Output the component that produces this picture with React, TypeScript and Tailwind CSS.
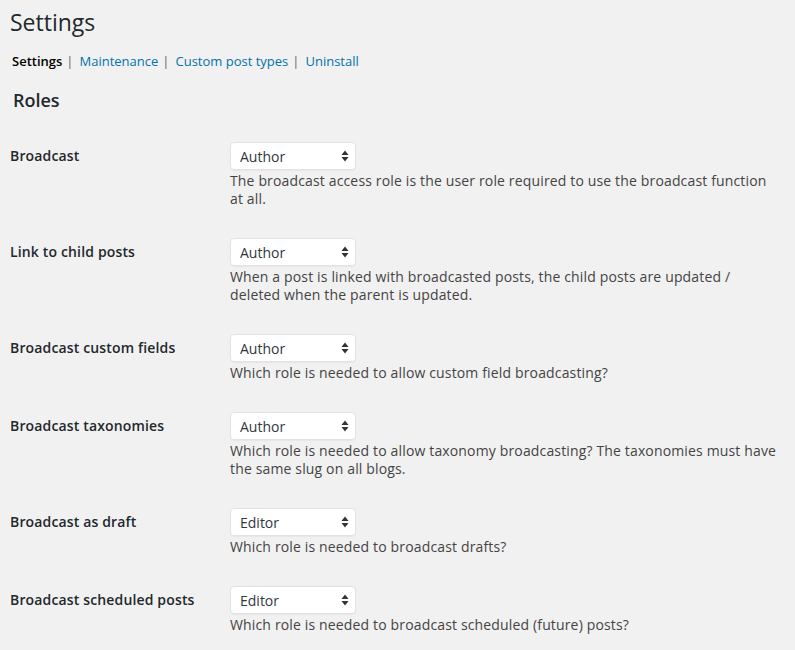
import React from 'react';

const rows = [
  {
    label: 'Broadcast',
    value: 'Author',
    desc: 'The broadcast access role is the user role required to use the broadcast function at all.',
  },
  {
    label: 'Link to child posts',
    value: 'Author',
    desc: 'When a post is linked with broadcasted posts, the child posts are updated / deleted when the parent is updated.',
  },
  {
    label: 'Broadcast custom fields',
    value: 'Author',
    desc: 'Which role is needed to allow custom field broadcasting?',
  },
  {
    label: 'Broadcast taxonomies',
    value: 'Author',
    desc: 'Which role is needed to allow taxonomy broadcasting? The taxonomies must have the same slug on all blogs.',
  },
  {
    label: 'Broadcast as draft',
    value: 'Editor',
    desc: 'Which role is needed to broadcast drafts?',
  },
  {
    label: 'Broadcast scheduled posts',
    value: 'Editor',
    desc: 'Which role is needed to broadcast scheduled (future) posts?',
  },
];

const tabs = ['Settings', 'Maintenance', 'Custom post types', 'Uninstall'];

const SelectBox = ({ value }: { value: string }) => (
  <div className="flex h-[28px] w-[126px] items-center justify-between rounded-[4px] border border-[#e2e2e2] bg-white pl-[9px] pr-[6px] text-[14px] text-[#32373c] shadow-[0_1px_1px_rgba(0,0,0,0.04)]">
    <span>{value}</span>
    <svg width="8" height="12" viewBox="0 0 8 12">
      <path d="M4 0.5 L7.5 5 L0.5 5 Z" fill="#333" />
      <path d="M4 11.5 L7.5 7 L0.5 7 Z" fill="#333" />
    </svg>
  </div>
);

export default function App() {
  return (
    <div className="min-h-screen w-full bg-[#f1f1f1] pl-[10px] pr-[10px] font-['Open_Sans',sans-serif] text-[14px] text-[#444]">
      <h1 className="pt-[8px] text-[23px] leading-[29px] font-normal text-[#23282d]">Settings</h1>

      <ul className="mt-[15px] flex items-center text-[13px] leading-[18px] pl-[2px]">
        {tabs.map((t, i) => (
          <li key={t} className="flex items-center">
            {i === 0 ? (
              <span className="font-semibold text-black">{t}</span>
            ) : (
              <a href="#" className="text-[#0073aa]">
                {t}
              </a>
            )}
            {i < tabs.length - 1 && <span className="pl-[4px] pr-[6px] text-[#666]">|</span>}
          </li>
        ))}
      </ul>

      <h2 className="mt-[19px] pl-[3px] text-[18px] leading-[22px] font-semibold text-[#23282d]">Roles</h2>

      <div className="mt-[16px] flex flex-col">
        {rows.map((r) => (
          <div key={r.label} className="flex">
            <div className="w-[220px] shrink-0 pt-[20px] pb-[20px] text-[14px] leading-[18px] font-semibold tracking-[0.15px] text-[#23282d]">
              {r.label}
            </div>
            <div className="flex-1 py-[15px] pr-[5px]">
              <SelectBox value={r.value} />
              <p className="mt-[2px] text-[14px] leading-[18px] tracking-[0.15px] text-[#444]">{r.desc}</p>
            </div>
          </div>
        ))}
      </div>
    </div>
  );
}
